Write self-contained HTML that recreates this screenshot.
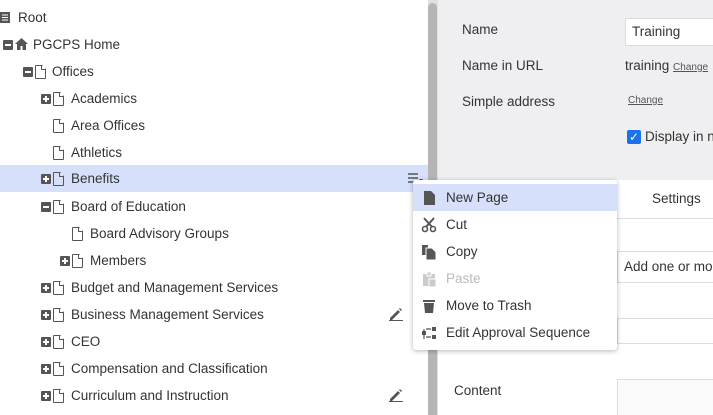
<html><head><style>
body{margin:0;width:713px;height:415px;overflow:hidden;font-family:"Liberation Sans",sans-serif;font-size:13.5px;color:#333;background:#fff;position:relative;white-space:nowrap}
.row{position:absolute;left:0;width:428px;height:27px;line-height:27px}
.row span.t{position:absolute}
.tg{position:absolute;top:9px;width:10px;height:10px;background:#555;border-radius:1px}
.tg:before{content:"";position:absolute;left:2px;top:4px;width:6px;height:2px;background:#fff}
.tg.p:after{content:"";position:absolute;left:4px;top:2px;width:2px;height:6px;background:#fff}
.pg{position:absolute;top:7px;width:9px;height:12px;border:1px solid #555;border-radius:1px;clip-path:polygon(0 0,65% 0,100% 30%,100% 100%,0 100%)}
.pg:after{content:"";position:absolute;right:-1px;top:-1px;width:4px;height:4px;border-left:1px solid #555;border-bottom:1px solid #555}
.right{position:absolute;left:438px;top:0;width:275px;height:415px;background:#efeff1;overflow:hidden}
.lbl{position:absolute;left:24px}
.menu{position:absolute;left:413px;top:180px;width:204px;height:170px;background:#fff;box-shadow:0 1px 5px rgba(0,0,0,.3);border-radius:3px}
.mi{position:absolute;left:0;width:204px;height:27px;line-height:27px}
.mi span{position:absolute;left:33px}
.mi svg{position:absolute;left:8px;top:6px}
a{color:#555;font-size:10px;text-decoration:underline}
.pen{position:absolute;left:389px;top:6px}
</style></head><body>
<div class="right">
 <div class="lbl" style="top:22px">Name</div>
 <div style="position:absolute;left:187px;top:18px;width:100px;height:26px;background:#fff;border:1px solid #ddd;line-height:26px;padding-left:6px">Training</div>
 <div class="lbl" style="top:58px">Name in URL</div>
 <div style="position:absolute;left:187px;top:58px">training <a>Change</a></div>
 <div class="lbl" style="top:94px">Simple address</div>
 <div style="position:absolute;left:190px;top:95px"><a>Change</a></div>
 <div style="position:absolute;left:189px;top:130px;width:14px;height:14px;background:#1a73e8;border-radius:2px;color:#fff;font-size:12px;line-height:14px;text-align:center">✓</div>
 <div style="position:absolute;left:207px;top:129px">Display in n</div>
 <div style="position:absolute;left:0;top:180px;width:275px;height:235px;background:#fff"></div>
 <div style="position:absolute;left:0;top:218px;width:275px;height:1px;background:#ddd"></div>
 <div style="position:absolute;left:214px;top:191px">Settings</div>
 <div style="position:absolute;left:179px;top:251px;width:100px;height:30px;border:1px solid #ddd;line-height:30px;padding-left:6px">Add one or mor</div>
 <div style="position:absolute;left:179px;top:318px;width:100px;height:24px;border:1px solid #ddd"></div>
 <div style="position:absolute;left:16px;top:383px">Content</div>
 <div style="position:absolute;left:179px;top:379px;width:100px;height:40px;border:1px solid #ddd;background:#fafafa"></div>
</div>
<div style="position:absolute;left:428px;top:0;width:10px;height:415px;background:#e0e0e0"></div>
<div style="position:absolute;left:428px;top:3px;width:9px;height:412px;background:#b5b5b5;border-radius:5px 5px 0 0"></div>

<div class="row" style="top:4px"><svg style="position:absolute;left:0;top:8px" width="10" height="11"><path d="M0 0h10v11H0z" fill="#555"/><path d="M2 3h6M2 5.5h6M2 8h6" stroke="#fff" stroke-width="1"/></svg><span class="t" style="left:18px">Root</span></div>
<div class="row" style="top:31px"><i class="tg" style="left:3px"></i><svg style="position:absolute;left:15px;top:7px" width="13" height="12"><path d="M6.5 0L0 6h2v6h3.5V8h2v4H11V6h2z" fill="#555"/></svg><span class="t" style="left:33px">PGCPS Home</span></div>
<div class="row" style="top:58px"><i class="tg" style="left:23px"></i><i class="pg" style="left:35px"></i><span class="t" style="left:52px">Offices</span></div>
<div class="row" style="top:85px"><i class="tg p" style="left:41px"></i><i class="pg" style="left:53px"></i><span class="t" style="left:71px">Academics</span></div>
<div class="row" style="top:112px"><i class="pg" style="left:53px"></i><span class="t" style="left:71px">Area Offices</span></div>
<div class="row" style="top:139px"><i class="pg" style="left:53px"></i><span class="t" style="left:71px">Athletics</span></div>
<div class="row" style="top:165px;background:#d6e0fa"><i class="tg p" style="left:41px"></i><i class="pg" style="left:53px"></i><span class="t" style="left:71px">Benefits</span><svg style="position:absolute;left:408px;top:8px" width="16" height="11"><path d="M0 1h10M0 5h10M0 9h7" stroke="#555" stroke-width="1.6"/><path d="M11 6h4l-2 2.5z" fill="#555"/></svg></div>
<div class="row" style="top:193px"><i class="tg" style="left:41px"></i><i class="pg" style="left:53px"></i><span class="t" style="left:71px">Board of Education</span></div>
<div class="row" style="top:220px"><i class="pg" style="left:72px"></i><span class="t" style="left:90px">Board Advisory Groups</span></div>
<div class="row" style="top:247px"><i class="tg p" style="left:60px"></i><i class="pg" style="left:72px"></i><span class="t" style="left:90px">Members</span></div>
<div class="row" style="top:274px"><i class="tg p" style="left:41px"></i><i class="pg" style="left:53px"></i><span class="t" style="left:71px">Budget and Management Services</span></div>
<div class="row" style="top:301px"><i class="tg p" style="left:41px"></i><i class="pg" style="left:53px"></i><span class="t" style="left:71px">Business Management Services</span><svg class="pen" width="14" height="14"><path d="M1 11l8-8 2 2-8 8H1z" fill="#555"/><path d="M10 2l1-1 2 2-1 1z" fill="#555"/><path d="M0 13.5h14" stroke="#555"/></svg></div>
<div class="row" style="top:328px"><i class="tg p" style="left:41px"></i><i class="pg" style="left:53px"></i><span class="t" style="left:71px">CEO</span></div>
<div class="row" style="top:355px"><i class="tg p" style="left:41px"></i><i class="pg" style="left:53px"></i><span class="t" style="left:71px">Compensation and Classification</span></div>
<div class="row" style="top:382px"><i class="tg p" style="left:41px"></i><i class="pg" style="left:53px"></i><span class="t" style="left:71px">Curriculum and Instruction</span><svg class="pen" width="14" height="14"><path d="M1 11l8-8 2 2-8 8H1z" fill="#555"/><path d="M10 2l1-1 2 2-1 1z" fill="#555"/><path d="M0 13.5h14" stroke="#555"/></svg></div>

<div class="menu">
 <div class="mi" style="top:4px;background:#d6e0fa"><svg width="16" height="16"><path d="M3 1h7l4 4v10H3z" fill="#555"/></svg><span>New Page</span></div>
 <div class="mi" style="top:31px"><svg width="16" height="16"><circle cx="4" cy="12" r="2.5" fill="none" stroke="#555" stroke-width="1.6"/><circle cx="12" cy="12" r="2.5" fill="none" stroke="#555" stroke-width="1.6"/><path d="M3 1l8 9M13 1l-8 9" stroke="#555" stroke-width="2"/></svg><span>Cut</span></div>
 <div class="mi" style="top:58px"><svg width="16" height="16"><path d="M1 1h6v10H1z" fill="#555"/><path d="M5 4h6l4 4v8H5z" fill="#555" stroke="#fff"/></svg><span>Copy</span></div>
 <div class="mi" style="top:85px;color:#bbb"><svg width="16" height="16"><path d="M2 3h12v12H2z" fill="#ccc"/><path d="M6 1h4v4H6zM8 8h7v8H8z" fill="#ccc" stroke="#fff"/></svg><span>Paste</span></div>
 <div class="mi" style="top:112px"><svg width="16" height="16"><path d="M2 2h12v2H2zM3 5h10l-1 10H4z" fill="#555"/></svg><span>Move to Trash</span></div>
 <div class="mi" style="top:139px"><svg width="16" height="16"><path d="M1 6h4v4H1zM11 2h4v4h-4zM11 10h4v4h-4z" fill="#555"/><path d="M5 4h5M5 12h5M3 4v10" stroke="#555" stroke-width="1.2" fill="none"/></svg><span>Edit Approval Sequence</span></div>
</div>
</body></html>
